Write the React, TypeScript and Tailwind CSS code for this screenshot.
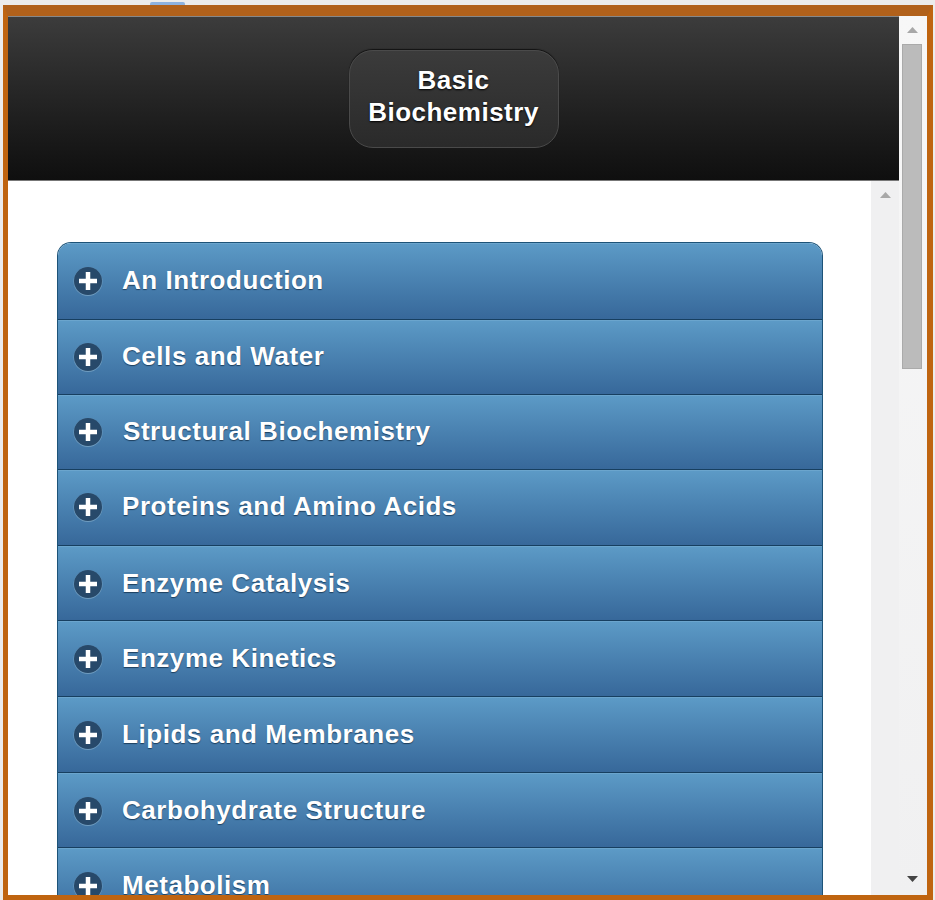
const rows = [
  { label: "An Introduction", h: "h-[77px]", pb: "pb-[3px]", shift: "" },
  { label: "Cells and Water", h: "h-[75px]", pb: "pb-[4px]", shift: "" },
  { label: "Structural Biochemistry", h: "h-[75px]", pb: "pb-[4px]", shift: "ml-px" },
  { label: "Proteins and Amino Acids", h: "h-[76px]", pb: "pb-[4px]", shift: "" },
  { label: "Enzyme Catalysis", h: "h-[75px]", pb: "pb-[2px]", shift: "" },
  { label: "Enzyme Kinetics", h: "h-[76px]", pb: "pb-[2px]", shift: "" },
  { label: "Lipids and Membranes", h: "h-[76px]", pb: "pb-[2px]", shift: "" },
  { label: "Carbohydrate Structure", h: "h-[75px]", pb: "pb-[2px]", shift: "" },
  { label: "Metabolism", h: "h-[76px]", pb: "pb-[2px]", shift: "" },
];

function PlusIcon({ className }: { className?: string }) {
  return (
    <svg width="30" height="30" viewBox="0 0 30 30" className={className}>
      <circle cx="15" cy="15.5" r="14.5" fill="#6f9cbf" />
      <circle cx="15" cy="15" r="14" fill="#27496a" />
      <path d="M15 6v18M6 15h18" stroke="#fff" strokeWidth="4.5" />
    </svg>
  );
}

function Arrow({ down, className }: { down?: boolean; className?: string }) {
  return (
    <svg width="11" height="6" viewBox="0 0 11 6" className={className}>
      <path d={down ? "M0 0h11L5.5 6z" : "M5.5 0L11 6H0z"} fill={down ? "#444" : "#a8a8a8"} />
    </svg>
  );
}

export default function App() {
  return (
    <div className="w-[935px] h-[900px] overflow-hidden bg-[#ececec] font-['Liberation_Sans',Arial,sans-serif]">
      <div className="h-[5px] pt-[2px] pl-[150px]">
        <div className="w-[35px] h-[3px] bg-[#8db2e0] rounded-t-[2px]" />
      </div>
      <div className="ml-[3px] w-[930px] h-[895px] border-solid border-[#bf6410] border-t-[#b1611b] border-t-[11px] border-l-[5px] border-r-[6px] border-b-[5px] bg-[#f1f1f2] flex overflow-hidden">
        <div className="w-[891px] h-full flex flex-col shrink-0">
          <header className="h-[165px] shrink-0 bg-gradient-to-b from-[#3c3c3c] to-[#0f0f0f] border-t border-[#888] border-b border-b-[#777] pt-[33px] flex justify-center">
            <div className="w-[210px] h-[98px] pb-[7px] rounded-[24px] bg-gradient-to-b from-[#3b3b3b] to-[#2a2a2a] border border-[#4a4a4a] shadow-[0_-1px_1px_#111] flex items-center justify-center text-center text-white font-bold text-[26px] leading-[32px] tracking-[0.5px] [text-shadow:0_1px_2px_#000]">
              Basic
              <br />
              Biochemistry
            </div>
          </header>
          <div className="flex-1 flex min-h-0">
            <main className="w-[863px] shrink-0 bg-white pt-[61px] pl-[49px] overflow-hidden">
              <div className="w-[766px] rounded-t-[14px] overflow-hidden border-x border-t border-[#1d5378]">
                {rows.map((r) => (
                  <div
                    key={r.label}
                    className={`${r.h} ${r.pb} flex items-center gap-[19px] pl-[15px] bg-gradient-to-b from-[#5c9ac6] to-[#37689a] border-b border-b-[#173f60] border-t border-t-[#6ba5cd]`}
                  >
                    <PlusIcon className="shrink-0 mt-[2px]" />
                    <span
                      className={`${r.shift} text-white font-bold text-[26px] leading-none tracking-[0.55px] [text-shadow:0_1px_1px_#1d3f5e]`}
                    >
                      {r.label}
                    </span>
                  </div>
                ))}
              </div>
            </main>
            <div className="w-[28px] bg-[#f0f0f1] flex justify-center pt-[11px]">
              <Arrow />
            </div>
          </div>
        </div>
        <aside className="flex-1 flex flex-col items-center bg-gradient-to-b from-[#f7f7f7] to-[#f0f0f1] pt-[11px] pb-[13px] pr-[2px]">
          <Arrow />
          <div className="w-[20px] h-[325px] mt-[11px] bg-[#bbbbbb] border border-[#aaa]" />
          <Arrow down className="mt-auto" />
        </aside>
      </div>
    </div>
  );
}
